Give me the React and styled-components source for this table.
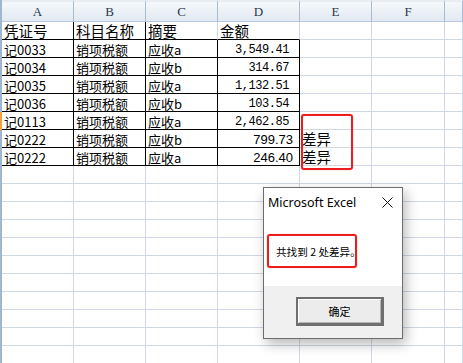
import React from "react";
import styled, { createGlobalStyle } from "styled-components";

const Global = createGlobalStyle`
  html, body { margin: 0; padding: 0; background: #fff; overflow: hidden; }
  body { width: 463px; height: 363px; }
`;

const CJK = `"Noto Sans CJK SC", "Liberation Sans", sans-serif`;
const LAT = `"Liberation Sans", "Noto Sans CJK SC", sans-serif`;

const Page = styled.div`
  position: relative;
  width: 463px;
  height: 363px;
  overflow: hidden;
`;

const Sheet = styled.div`
  display: grid;
  grid-template-columns: 2px 72px 72px 72px 82px 72px 73px 1fr;
  grid-template-rows: 22px repeat(20, 18px);
`;

const Strip = styled.div`
  background: ${(p) => (p.$active ? "#f2a43a" : "#9eb6ce")};
`;

const ColHead = styled.div`
  box-sizing: border-box;
  border-top: 2px solid #e8edf3;
  border-right: 1px solid #a9bcd3;
  border-bottom: 1px solid #b9c8da;
  background: linear-gradient(#f5f8fb, #e2e9f2);
  display: flex;
  align-items: center;
  justify-content: center;
  font-family: "Liberation Serif", serif;
  font-size: 13px;
  color: #27384e;
  padding-top: 1px;
`;

const Cell = styled.div`
  box-sizing: border-box;
  border-right: 1px solid ${(p) => (p.$r ? "#000" : "#d0d7e5")};
  border-bottom: 1px solid ${(p) => (p.$b ? "#000" : "#d0d7e5")};
  display: flex;
  align-items: flex-end;
  justify-content: ${(p) => (p.$right ? "flex-end" : "flex-start")};
  padding: 0 ${(p) => (p.$right ? (p.$mono ? "10px" : "6px") : "0")} 1px
    ${(p) => (p.$right ? "0" : "2px")};
  font-family: ${(p) => (p.$mono ? `"Liberation Mono", monospace` : p.$lat ? LAT : CJK)};
  font-size: ${(p) => (p.$mono ? "12px" : p.$big ? "14.5px" : "13px")};
  letter-spacing: ${(p) => (p.$mono ? "-0.45px" : "0")};
  line-height: 1;
  color: #000;
  white-space: nowrap;
`;

const Mark = styled.div`
  position: absolute;
  box-sizing: border-box;
  left: ${(p) => p.$x}px;
  top: ${(p) => p.$y}px;
  width: ${(p) => p.$w}px;
  height: ${(p) => p.$h}px;
  border: 2px solid #ee1d1d;
  border-radius: 3px;
  box-shadow: 0 0 1px rgba(255, 0, 0, 0.6);
  pointer-events: none;
`;

const Dialog = styled.div`
  position: absolute;
  left: 263px;
  top: 187px;
  width: 140px;
  box-sizing: border-box;
  border: 1px solid #6d6d6d;
  background: #fff;
  display: flex;
  flex-direction: column;
  box-shadow: 3px 5px 12px rgba(0, 0, 0, 0.28);
`;

const TitleBar = styled.div`
  height: 28px;
  display: flex;
  align-items: center;
  justify-content: space-between;
  padding: 0 9px 0 4px;
  font-family: "Noto Sans", "Liberation Sans", sans-serif;
  font-size: 12.5px;
  color: #000;
`;

const Body = styled.div`
  height: 70px;
  padding: 18px 0 0 3px;
  box-sizing: border-box;
`;

const Message = styled.div`
  box-sizing: border-box;
  width: 90px;
  height: 34px;
  border: 2px solid #ee1d1d;
  border-radius: 3px;
  box-shadow: 0 0 1px rgba(255, 0, 0, 0.6);
  display: flex;
  align-items: center;
  padding-left: 7px;
  font-family: ${CJK};
  font-size: 10.6px;
  color: #000;
  white-space: nowrap;
`;

const Footer = styled.div`
  height: 52px;
  background: #f0f0f0;
  padding: 11px 0 0 32px;
  box-sizing: border-box;
`;

const Button = styled.div`
  box-sizing: border-box;
  width: 88px;
  height: 29px;
  border-style: solid;
  border-color: #6f6f6f;
  border-width: 2px 3px 3px 2px;
  background: #ececec;
  box-shadow: inset 1px 1px 0 #fff, inset -1px -1px 0 #b5b5b5;
  display: flex;
  align-items: center;
  justify-content: center;
  font-family: ${CJK};
  font-size: 11px;
  color: #000;
`;

const CloseIcon = () => (
  <svg width="11" height="11" viewBox="0 0 11 11">
    <path d="M0.5 0.5 L10.5 10.5 M10.5 0.5 L0.5 10.5" stroke="#111" strokeWidth="1" />
  </svg>
);

const letters = ["A", "B", "C", "D", "E", "F", ""];

const data = [
  ["记0033", "销项税额", "应收a", "3,549.41", "mono", ""],
  ["记0034", "销项税额", "应收b", "314.67", "mono", ""],
  ["记0035", "销项税额", "应收a", "1,132.51", "mono", ""],
  ["记0036", "销项税额", "应收b", "103.54", "mono", ""],
  ["记0113", "销项税额", "应收a", "2,462.85", "mono", ""],
  ["记0222", "销项税额", "应收b", "799.73", "lat", "差异"],
  ["记0222", "销项税额", "应收a", "246.40", "lat", "差异"],
];

export default function App() {
  const rows = [];
  rows.push(
    <React.Fragment key="r1">
      <Strip />
      <Cell $big $r $b>凭证号</Cell>
      <Cell $big $r $b>科目名称</Cell>
      <Cell $big $b>摘要</Cell>
      <Cell $big $b>金额</Cell>
      <Cell />
      <Cell />
      <Cell />
    </React.Fragment>
  );
  data.forEach((d, i) => {
    rows.push(
      <React.Fragment key={"d" + i}>
        <Strip $active={i === 4} />
        <Cell $r $b>{d[0]}</Cell>
        <Cell $r $b>{d[1]}</Cell>
        <Cell $r $b>{d[2]}</Cell>
        <Cell $r $b $right $mono={d[4] === "mono"} $lat={d[4] === "lat"}>
          {d[3]}
        </Cell>
        <Cell $big>{d[5]}</Cell>
        <Cell />
        <Cell />
      </React.Fragment>
    );
  });
  for (let i = 0; i < 12; i++) {
    rows.push(
      <React.Fragment key={"e" + i}>
        <Strip />
        <Cell />
        <Cell />
        <Cell />
        <Cell />
        <Cell />
        <Cell />
        <Cell />
      </React.Fragment>
    );
  }
  return (
    <Page>
      <Global />
      <Sheet>
        <Strip />
        {letters.map((l, i) => (
          <ColHead key={i}>{l}</ColHead>
        ))}
        {rows}
      </Sheet>
      <Mark $x={301} $y={114} $w={52} $h={56} />
      <Dialog>
        <TitleBar>
          <span>Microsoft Excel</span>
          <CloseIcon />
        </TitleBar>
        <Body>
          <Message>共找到 2 处差异。</Message>
        </Body>
        <Footer>
          <Button>确定</Button>
        </Footer>
      </Dialog>
    </Page>
  );
}
